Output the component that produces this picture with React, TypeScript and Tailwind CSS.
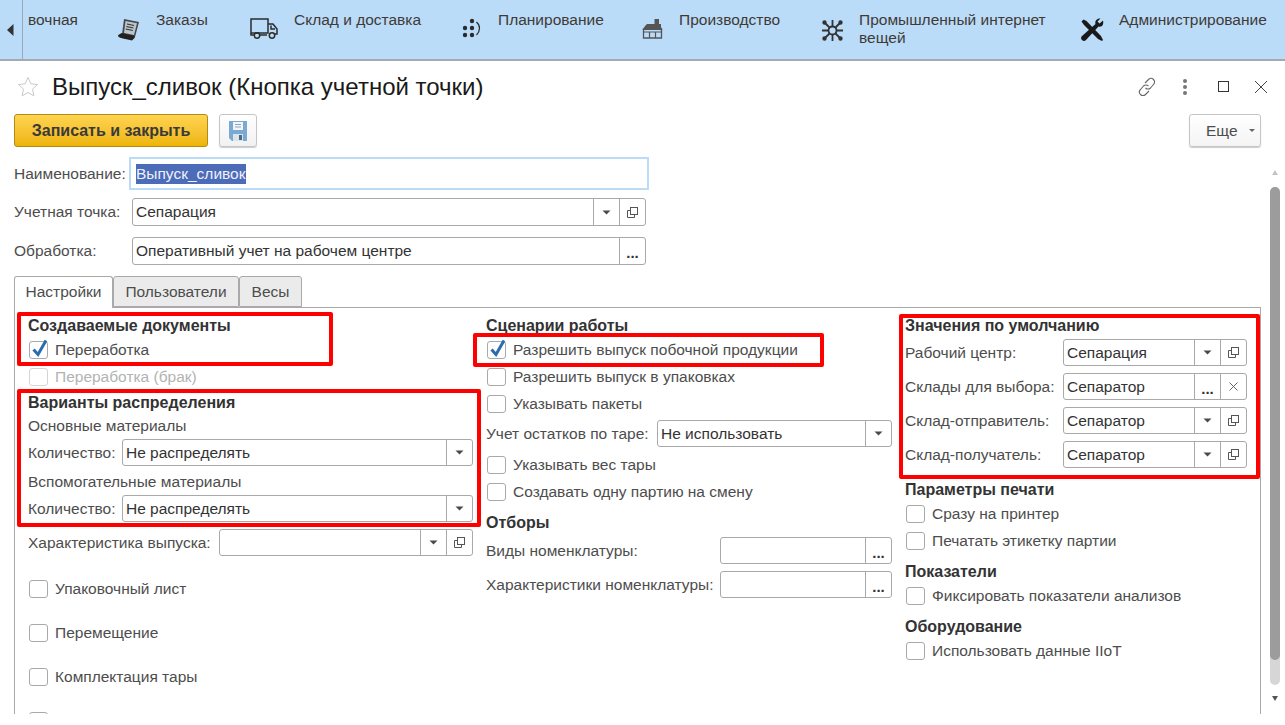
import type { ReactNode } from 'react';

const labelColor = 'text-[#4d4d4d]';

// кнопка выпадающего списка
const Caret = () => (
  <svg width="9" height="5" viewBox="0 0 9 5">
    <path d="M0.5 0.5h8L4.500 4.500z" fill="#4a4a4a" />
  </svg>
);

const OpenIcon = () => (
  <svg width="13" height="13" viewBox="0 0 13 13" fill="none" stroke="#555" strokeWidth="1">
    <rect x="4.500" y="1.500" width="7" height="7" />
    <path d="M4.500 4.500h-3v7h7v-3" />
  </svg>
);

const Dots = () => <span className="text-[#333] text-[15px] font-bold leading-none mt-[3px]">...</span>;

const Clear = () => (
  <svg width="9" height="9" viewBox="0 0 9 9" stroke="#666" strokeWidth="1">
    <path d="M0.500 0.500l8 8M8.500 0.500l-8 8" />
  </svg>
);

type BoxProps = {
  width: string;
  height?: string;
  value?: string;
  children?: ReactNode;
};

const Box = ({ width, height = 'h-[27px]', value, children }: BoxProps) => (
  <div className={`${width} ${height} flex border border-[#a9a9a9] rounded-[3px] bg-white shrink-0`}>
    <div className="flex-1 min-w-0 pl-[3px] leading-[26px] text-[#333] whitespace-nowrap">{value}</div>
    {children}
  </div>
);

const Btn = ({ children }: { children: ReactNode }) => (
  <div className="w-[26px] shrink-0 border-l border-[#a9a9a9] flex items-center justify-center">{children}</div>
);

type CheckProps = {
  label: string;
  on?: boolean;
  muted?: boolean;
  className?: string;
};

const Check = ({ label, on, muted, className = '' }: CheckProps) => (
  <div className={`flex items-center shrink-0 pl-[1px] h-[26px] ${className}`}>
    <div className={`relative w-[19px] h-[18px] border rounded-[3px] bg-white shrink-0 ${muted ? 'border-[#d4d4d4]' : 'border-[#a9a9a9]'}`}>
      {on && (
        <svg className="absolute left-[1px] -top-[4px]" width="18" height="20" viewBox="0 0 18 20" fill="none">
          <path d="M2.500 11.500l4.500 5L15 2.500" stroke="#2b6cb0" strokeWidth="3" />
        </svg>
      )}
    </div>
    <span className={`ml-[7px] whitespace-nowrap ${muted ? 'text-[#b3b3b3]' : labelColor}`}>{label}</span>
  </div>
);

const Heading = ({ children, className = '' }: { children: ReactNode; className?: string }) => (
  <div className={`h-[24px] pt-[1px] shrink-0 leading-[24px] text-[16px] font-bold text-[#333] whitespace-nowrap ${className}`}>{children}</div>
);

const Text = ({ children, className = '' }: { children: ReactNode; className?: string }) => (
  <div className={`h-[22px] pt-[1px] shrink-0 leading-[22px] whitespace-nowrap ${labelColor} ${className}`}>{children}</div>
);

const Field = ({ label, labelWidth, children, className = '' }: { label: string; labelWidth: string; children: ReactNode; className?: string }) => (
  <div className={`flex items-center shrink-0 ${className}`}>
    <div className={`${labelWidth} shrink-0 whitespace-nowrap ${labelColor}`}>{label}</div>
    {children}
  </div>
);

const Tools = () => (
  <>
    <Btn><Caret /></Btn>
    <Btn><OpenIcon /></Btn>
  </>
);

// иконки разделов
const OrdersIcon = () => (
  <svg width="22" height="23" viewBox="0 0 22 23">
    <path d="M6 1l15 3-4 15-13-2.500z" fill="#474747" />
    <path d="M7.500 3l11.500 2.300-3 11.700-10-2z" fill="#b9c4cc" />
    <path d="M9 6l7 1.500M8.400 8.500l7 1.500M7.800 11l7 1.500" stroke="#333" strokeWidth="1.100" />
    <path d="M3.500 15l12.500 2.800 1 1.700-3 3-10-2.300c-3-.7-4-1.700-4-3z" fill="#222" />
  </svg>
);

const TruckIcon = () => (
  <svg width="28" height="22" viewBox="0 0 28 22" fill="none" stroke="#2b2b2b" strokeWidth="1.500">
    <rect x="1" y="1" width="17" height="14" />
    <path d="M18 6h5l4 5v5h-2M17 17H10M4 17H1v-2" />
    <circle cx="7" cy="17.500" r="2.700" />
    <circle cx="22" cy="17.500" r="2.700" />
    <path d="M21 7.500v3.500h4" />
  </svg>
);

const PlanIcon = () => (
  <svg width="19" height="20" viewBox="0 0 19 20" fill="#2b2b2b">
    <circle cx="10" cy="3" r="2.200" />
    <circle cx="3" cy="10" r="2.200" />
    <circle cx="10" cy="10" r="2.200" />
    <circle cx="3" cy="17" r="2.200" />
    <circle cx="10" cy="17" r="2.200" />
    <path d="M14.500 4c4 3.500 4 9 0 13" fill="none" stroke="#2b2b2b" strokeWidth="1.200" />
  </svg>
);

const FactoryIcon = () => (
  <svg width="21" height="21" viewBox="0 0 21 21">
    <path d="M12.500 1h4.500v7h-4.500z" fill="#555" />
    <path d="M5 6h14v3l1.500 3H.500L3 8z" fill="#555" />
    <path d="M1.500 11h18v9h-18z" fill="none" stroke="#555" strokeWidth="1.300" />
    <path d="M1 14h19M7.500 14v6M13.500 14v6" stroke="#555" strokeWidth="1.200" />
  </svg>
);

const NetIcon = () => (
  <svg width="25" height="25" viewBox="0 0 25 25" stroke="#333" strokeWidth="1.800" fill="#333">
    <circle cx="12.500" cy="12.500" r="4" fill="none" />
    <path d="M12.500 2v6.500M12.500 16.500V23M2 12.500h6.500M16.500 12.500H23M4.500 4.500l5 5M20.500 4.500l-5 5M4.500 20.500l5-5M20.500 20.500l-5-5" />
    <circle cx="20.500" cy="4.500" r="1.300" />
    <circle cx="4.500" cy="20.500" r="1.300" />
    <circle cx="20.500" cy="20.500" r="1.300" />
    <circle cx="4.500" cy="4.500" r="1.300" />
  </svg>
);

const ToolsIcon = () => (
  <svg width="24" height="24" viewBox="0 0 24 24" fill="#1a1a1a">
    <path d="M1.500 3.500l2-2 3 1.500L21 18l2 4-1 1-4-2L4 7z" />
    <path d="M23 2.500l-3.500 3-2-2 3-3c-3-.5-6 2-5 5.500L2 18c-1.500 1.500-1 3 0 4s2.500 1.500 4 0L18.500 8.500c3.500 1 5.500-2 4.500-6z" />
  </svg>
);

const MenuItem = ({ width, gutter, icon, label }: { width: string; gutter: string; icon?: ReactNode; label: string }) => (
  <div className={`${width} shrink-0 flex`}>
    <div className={`${gutter} shrink-0 pt-[18px]`}>{icon}</div>
    <div className="pt-[11px] leading-[18px] text-[#3f3a36]">{label}</div>
  </div>
);

export default function App() {
  return (
    <div className="w-[1285px] h-[725px] overflow-hidden bg-white flex flex-col text-[15.5px] font-['Liberation_Sans',Arial,sans-serif]">
      <header className="h-[61px] shrink-0 flex bg-[#bbdcf9] border-b-2 border-[#a3aab0]">
        <div className="w-[23px] shrink-0 border-r border-[#97a9ba] flex items-center pl-[7px]">
          <svg width="7" height="12" viewBox="0 0 7 12">
            <path d="M6.500 0v12L0 6z" fill="#333" />
          </svg>
        </div>
        <MenuItem width="w-[95px]" gutter="w-[5px]" label="вочная" />
        <MenuItem width="w-[132px]" gutter="w-[38px]" icon={<OrdersIcon />} label="Заказы" />
        <MenuItem width="w-[212px]" gutter="w-[44px]" icon={<TruckIcon />} label="Склад и доставка" />
        <MenuItem width="w-[180px]" gutter="w-[36px]" icon={<PlanIcon />} label="Планирование" />
        <MenuItem width="w-[178px]" gutter="w-[37px]" icon={<FactoryIcon />} label="Производство" />
        <MenuItem width="w-[260px]" gutter="w-[39px]" icon={<NetIcon />} label="Промышленный интернет вещей" />
        <MenuItem width="w-[205px]" gutter="w-[39px]" icon={<ToolsIcon />} label="Администрирование" />
      </header>

      <div className="h-[52px] shrink-0 flex items-center pl-[17px] pb-[1px]">
        <svg width="22" height="21" viewBox="0 0 22 21" fill="none">
          <path d="M11 1.500l2.900 6.300 6.600.7-5 4.600 1.400 6.700L11 16.500l-5.900 3.300 1.400-6.700-5-4.600 6.600-.7z" stroke="#c9c9c9" strokeWidth="1" />
        </svg>
        <h1 className="ml-[13px] text-[24px] text-[#1a1a1a] leading-none whitespace-nowrap">Выпуск_сливок (Кнопка учетной точки)</h1>
        <div className="ml-auto flex items-center pr-[17px]">
          <svg width="22" height="22" viewBox="0 0 22 22" fill="none" stroke="#666" strokeWidth="1.100">
            <path d="M9 7l3.500-3.500a3.500 3.500 0 0 1 5 5L14.500 12a3.500 3.500 0 0 1-5 0" />
            <path d="M13 15l-3.500 3.500a3.500 3.500 0 0 1-5-5L7.500 10a3.500 3.500 0 0 1 5 0" />
          </svg>
          <div className="ml-[25px] flex flex-col gap-[2px]">
            <span className="w-[4px] h-[4px] rounded-full bg-[#777]" />
            <span className="w-[4px] h-[4px] rounded-full bg-[#777]" />
            <span className="w-[4px] h-[4px] rounded-full bg-[#777]" />
          </div>
          <div className="ml-[31px] w-[11px] h-[11px] border border-[#333]" />
          <svg className="ml-[25px]" width="14" height="14" viewBox="0 0 14 14" stroke="#444" strokeWidth="1">
            <path d="M1 1l12 12M13 1L1 13" />
          </svg>
        </div>
      </div>

      <div className="flex-1 min-h-0 flex">
        <div className="w-[1261px] shrink-0 pl-[14px]">
          <div className="h-[33px] mt-[1px] flex">
            <button className="w-[194px] h-[33px] rounded-[3px] border border-[#b38b14] bg-gradient-to-b from-[#ffd44f] to-[#eeb500] text-[16px] font-bold text-[#3a3a3a]">
              Записать и закрыть
            </button>
            <button className="ml-[11px] w-[38px] h-[33px] rounded-[3px] border border-[#c6c6c6] shadow-[0_1px_1px_#ccc] bg-gradient-to-b from-white to-[#f1f1f1] flex items-center justify-center">
              <svg width="18" height="20" viewBox="0 0 18 20">
                <path d="M0 0h18v20H3l-3-3z" fill="#7aa9d4" />
                <path d="M4 1h10v8H4z" fill="#f3f6f9" />
                <path d="M6 3.500h6M6 6h6" stroke="#8aa6c0" strokeWidth="1" />
                <path d="M4 13h10v7H4z" fill="#dce4ea" />
                <path d="M10 14h3v5h-3z" fill="#466c90" />
              </svg>
            </button>
            <button className="ml-auto w-[72px] h-[33px] rounded-[3px] border border-[#c6c6c6] shadow-[0_1px_1px_#ccc] bg-gradient-to-b from-white to-[#f4f4f4] text-[#4d4d4d] flex items-center pl-[16px]">
              Еще
              <svg className="ml-[11px]" width="6" height="3" viewBox="0 0 6 3"><path d="M0 0h6L3 3z" fill="#666" /></svg>
            </button>
          </div>

          <div className="h-[33px] mt-[10px] flex items-center">
            <div className={`w-[115px] shrink-0 ${labelColor}`}>Наименование:</div>
            <div className="w-[520px] h-[33px] border-2 border-[#bbdcf9] pl-[5px] leading-[29px] text-[#eef2fa] whitespace-nowrap">
              <span className="bg-[#4c6bb8] inline-block leading-[20px]">Выпуск_сливок</span>
            </div>
          </div>
          <Field label="Учетная точка:" labelWidth="w-[118px]" className="mt-[8px]">
            <Box width="w-[514px]" height="h-[28px]" value="Сепарация"><Tools /></Box>
          </Field>
          <Field label="Обработка:" labelWidth="w-[118px]" className="mt-[11px]">
            <Box width="w-[514px]" height="h-[28px]" value="Оперативный учет на рабочем центре"><Btn><Dots /></Btn></Box>
          </Field>

          <div className="flex h-[32px] mt-[11px]">
            <div className="w-[99px] h-[32px] relative z-10 border border-b-0 border-[#a9a9a9] rounded-t-[3px] bg-white text-center leading-[30px] text-[#4d4d4d]">Настройки</div>
            <div className="w-[126px] h-[31px] border border-[#a9a9a9] rounded-t-[3px] bg-[#ebebeb] text-center leading-[29px] text-[#4d4d4d]">Пользователи</div>
            <div className="w-[63px] h-[31px] border border-[#a9a9a9] rounded-t-[3px] bg-[#ebebeb] text-center leading-[29px] text-[#4d4d4d]">Весы</div>
          </div>

          <section className="relative -mt-[1px] h-[407px] overflow-hidden border border-b-0 border-[#a9a9a9] pl-[13px] pt-[5px] flex">
            <div className="w-[458px] shrink-0 flex flex-col">
              <Heading>Создаваемые документы</Heading>
              <Check label="Переработка" on />
              <Check className="mt-[1px]" label="Переработка (брак)" muted />
              <Heading>Варианты распределения</Heading>
              <Text>Основные материалы</Text>
              <Field label="Количество:" labelWidth="w-[94px]" className="mt-[3px]">
                <Box width="w-[351px]" value="Не распределять"><Btn><Caret /></Btn></Box>
              </Field>
              <Text className="mt-[4px]">Вспомогательные материалы</Text>
              <Field label="Количество:" labelWidth="w-[94px]" className="mt-[3px]">
                <Box width="w-[351px]" value="Не распределять"><Btn><Caret /></Btn></Box>
              </Field>
              <Field label="Характеристика выпуска:" labelWidth="w-[191px]" className="mt-[7px]">
                <Box width="w-[254px]"><Tools /></Box>
              </Field>
              <Check className="mt-[20px]" label="Упаковочный лист" />
              <Check className="mt-[18px]" label="Перемещение" />
              <Check className="mt-[18px]" label="Комплектация тары" />
              <Check className="mt-[18px]" label="" />
            </div>

            <div className="w-[419px] shrink-0 flex flex-col">
              <Heading>Сценарии работы</Heading>
              <Check label="Разрешить выпуск побочной продукции" on />
              <Check className="mt-[1px]" label="Разрешить выпуск в упаковках" />
              <Check className="mt-[1px]" label="Указывать пакеты" />
              <Field label="Учет остатков по таре:" labelWidth="w-[171px]" className="mt-[3px]">
                <Box width="w-[235px]" value="Не использовать"><Btn><Caret /></Btn></Box>
              </Field>
              <Check className="mt-[5px]" label="Указывать вес тары" />
              <Check className="mt-[1px]" label="Создавать одну партию на смену" />
              <Heading className="mt-[5px]">Отборы</Heading>
              <Field label="Виды номенклатуры:" labelWidth="w-[234px]" className="mt-[3px]">
                <Box width="w-[172px]"><Btn><Dots /></Btn></Box>
              </Field>
              <Field label="Характеристики номенклатуры:" labelWidth="w-[234px]" className="mt-[7px]">
                <Box width="w-[172px]"><Btn><Dots /></Btn></Box>
              </Field>
            </div>

            <div className="w-[342px] shrink-0 flex flex-col">
              <Heading>Значения по умолчанию</Heading>
              <Field label="Рабочий центр:" labelWidth="w-[158px]" className="mt-[2px]">
                <Box width="w-[184px]" value="Сепарация"><Tools /></Box>
              </Field>
              <Field label="Склады для выбора:" labelWidth="w-[158px]" className="mt-[7px]">
                <Box width="w-[184px]" value="Сепаратор">
                  <Btn><Dots /></Btn>
                  <Btn><Clear /></Btn>
                </Box>
              </Field>
              <Field label="Склад-отправитель:" labelWidth="w-[158px]" className="mt-[7px]">
                <Box width="w-[184px]" value="Сепаратор"><Tools /></Box>
              </Field>
              <Field label="Склад-получатель:" labelWidth="w-[158px]" className="mt-[7px]">
                <Box width="w-[184px]" value="Сепаратор"><Tools /></Box>
              </Field>
              <Heading className="mt-[9px]">Параметры печати</Heading>
              <Check label="Сразу на принтер" />
              <Check className="mt-[1px]" label="Печатать этикетку партии" />
              <Heading className="mt-[5px]">Показатели</Heading>
              <Check label="Фиксировать показатели анализов" />
              <Heading className="mt-[5px]">Оборудование</Heading>
              <Check label="Использовать данные IIoT" />
            </div>

            {/* красные рамки поверх формы */}
            <div className="absolute left-[2px] top-[4px] w-[316px] h-[54px] border-[4px] border-[#ff0000] rounded-[2px]" />
            <div className="absolute left-[2px] top-[81px] w-[464px] h-[138px] border-[4px] border-[#ff0000] rounded-[2px]" />
            <div className="absolute left-[458px] top-[25px] w-[351px] h-[34px] border-[4px] border-[#ff0000] rounded-[2px]" />
            <div className="absolute left-[884px] top-[6px] w-[361px] h-[165px] border-[4px] border-[#ff0000] rounded-[2px]" />
          </section>
        </div>

        <aside className="flex-1 flex flex-col items-start pl-[9px]">
          <svg className="mt-[57px] ml-[2px]" width="6" height="5" viewBox="0 0 6 5"><path d="M0 5h6L3 0z" fill="#c4c4c4" /></svg>
          <div className="mt-[12px] w-[10px] h-[498px] rounded-full bg-[#d6d6d6]">
            <div className="w-[10px] h-[473px] rounded-full bg-[#9c9c9c]" />
          </div>
          <svg className="mt-[11px] ml-[2px]" width="6" height="5" viewBox="0 0 6 5"><path d="M0 0h6L3 5z" fill="#555" /></svg>
        </aside>
      </div>
    </div>
  );
}
